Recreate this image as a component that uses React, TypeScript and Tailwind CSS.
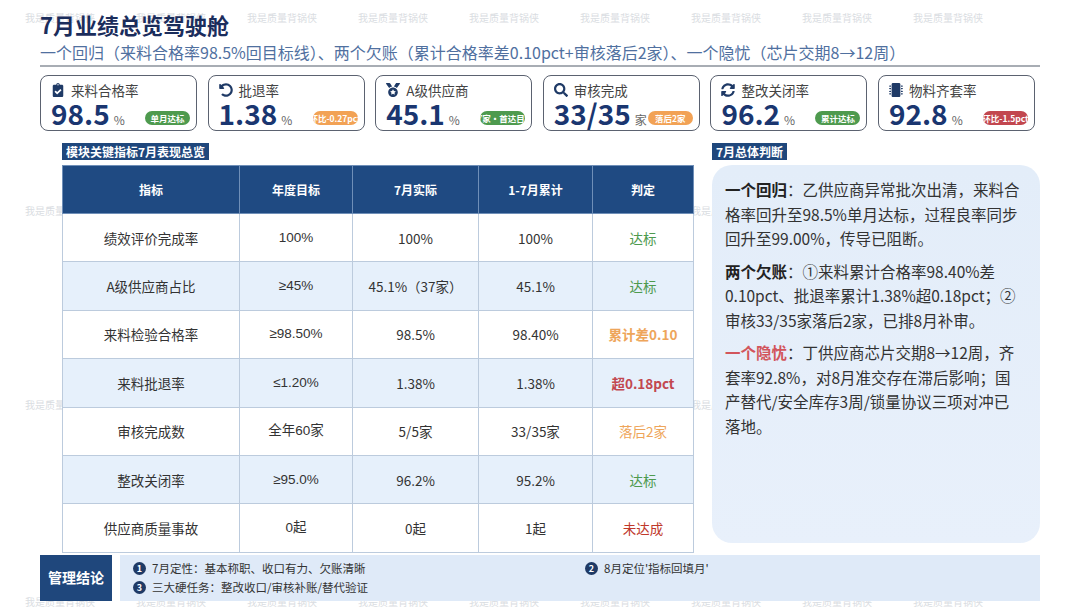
import { FaClipboardCheck, FaUndoAlt, FaMedal, FaSearch, FaSyncAlt, FaMicrochip } from "react-icons/fa";

const kpis = [
  { icon: FaClipboardCheck, label: "来料合格率", value: "98.5", unit: "%", badge: "单月达标", tone: "bg-[#4e9a4e]" },
  { icon: FaUndoAlt, label: "批退率", value: "1.38", unit: "%", badge: "环比-0.27pct", tone: "bg-[#f2a255]" },
  { icon: FaMedal, label: "A级供应商", value: "45.1", unit: "%", badge: "37家·首达目标", tone: "bg-[#4e9a4e]" },
  { icon: FaSearch, label: "审核完成", value: "33/35", unit: "家", badge: "落后2家", tone: "bg-[#f2a255]" },
  { icon: FaSyncAlt, label: "整改关闭率", value: "96.2", unit: "%", badge: "累计达标", tone: "bg-[#4e9a4e]" },
  { icon: FaMicrochip, label: "物料齐套率", value: "92.8", unit: "%", badge: "环比-1.5pct", tone: "bg-[#c2474f]" },
];

const rows = [
  { name: "绩效评价完成率", target: "100%", jul: "100%", ytd: "100%", verdict: "达标", color: "text-[#4e9a4e]" },
  { name: "A级供应商占比", target: "≥45%", jul: "45.1%（37家）", ytd: "45.1%", verdict: "达标", color: "text-[#4e9a4e]" },
  { name: "来料检验合格率", target: "≥98.50%", jul: "98.5%", ytd: "98.40%", verdict: "累计差0.10", color: "text-[#eea55a] font-bold" },
  { name: "来料批退率", target: "≤1.20%", jul: "1.38%", ytd: "1.38%", verdict: "超0.18pct", color: "text-[#c2474f] font-bold" },
  { name: "审核完成数", target: "全年60家", jul: "5/5家", ytd: "33/35家", verdict: "落后2家", color: "text-[#eea55a]" },
  { name: "整改关闭率", target: "≥95.0%", jul: "96.2%", ytd: "95.2%", verdict: "达标", color: "text-[#4e9a4e]" },
  { name: "供应商质量事故", target: "0起", jul: "0起", ytd: "1起", verdict: "未达成", color: "text-[#c0392b]" },
];

// faint repeating watermark, sits behind the content
const wmRows = [10, 203, 397, 594];
const wmCols = [25, 136, 247, 358, 469, 580, 691, 802, 913];

function Watermarks() {
  return (
    <div className="pointer-events-none absolute inset-0 overflow-hidden">
      {wmRows.map((y) =>
        wmCols.map((x) => (
          <span
            key={`${x}-${y}`}
            className="absolute whitespace-nowrap text-[10px] text-[#dadde2]"
            style={{ left: x, top: y }}
          >
            我是质量背锅侠
          </span>
        ))
      )}
    </div>
  );
}

function Num({ n }: { n: string }) {
  return (
    <span className="mr-[6px] inline-flex h-[13px] w-[13px] shrink-0 items-center justify-center rounded-full bg-[#1f3a66] text-[9px] font-bold leading-none text-white">
      {n}
    </span>
  );
}

export default function App() {
  return (
    <div
      className="relative h-[608px] w-[1080px] overflow-hidden bg-white"
      style={{ fontFamily: '"Noto Sans CJK SC", "Noto Sans", sans-serif' }}
    >
      <Watermarks />
      <div className="relative px-[40px] pt-[8px]">
        {/* Header */}
        <h1 className="text-[22px] font-bold leading-[32px] text-[#1b2d5c]">7月业绩总览驾驶舱</h1>
        <div className="border-b-2 border-[#a8adb4] text-[16px] leading-[25px] text-[#50709f]">
          一个回归（来料合格率98.5%回目标线）、两个欠账（累计合格率差0.10pct+审核落后2家）、一个隐忧（芯片交期8→12周）
        </div>

        {/* KPI cards */}
        <div className="mt-[8px] grid w-[995px] grid-cols-6 gap-[10.6px]">
          {kpis.map((k) => {
            const Icon = k.icon;
            return (
              <div key={k.label} className="h-[56px] rounded-[8px] border-[1.5px] border-[#5b6270] bg-white pl-[10px] pr-[6px] pt-[5px]">
                <div className="flex items-center gap-[6px] text-[13.5px] leading-[18px] text-[#444]">
                  <Icon className="text-[14px] text-[#1f3a66]" />
                  <span>{k.label}</span>
                </div>
                <div className="flex items-end justify-between">
                  <div className="flex items-baseline">
                    <span className="text-[28px] font-bold leading-[28px] text-[#1a3670]">{k.value}</span>
                    <span className="ml-[4px] text-[12px] text-[#666]">{k.unit}</span>
                  </div>
                  <div className={`mb-[4px] flex h-[14px] w-[45px] items-center justify-center overflow-hidden rounded-full ${k.tone}`}>
                    <span className="whitespace-nowrap text-[8.5px] font-bold leading-none text-white">{k.badge}</span>
                  </div>
                </div>
              </div>
            );
          })}
        </div>

        {/* Middle */}
        <div className="mt-[12px] flex gap-[19px] pl-[22px]">
          <div className="w-[631px]">
            <div className="w-fit bg-[#1f477c] px-[4px] text-[12px] font-bold leading-[17px] text-white">
              模块关键指标7月表现总览
            </div>
            <table className="mt-[5px] w-[631px] table-fixed border-collapse bg-white text-center">
              <colgroup>
                <col className="w-[177px]" />
                <col className="w-[113px]" />
                <col className="w-[126px]" />
                <col className="w-[114px]" />
                <col className="w-[101px]" />
              </colgroup>
              <thead>
                <tr className="h-[48px] bg-[#1f4a82] text-[12px] font-bold text-white">
                  {["指标", "年度目标", "7月实际", "1-7月累计", "判定"].map((h) => (
                    <th key={h} className="border border-[#6f8fb8]">{h}</th>
                  ))}
                </tr>
              </thead>
              <tbody>
                {rows.map((r, i) => (
                  <tr key={r.name} className={`h-[48.4px] text-[13.5px] text-[#333] ${i % 2 === 1 ? "bg-[#e6f0fb]" : "bg-white"}`}>
                    <td className="border border-[#bccbdd]">{r.name}</td>
                    <td className="border border-[#bccbdd]" style={{ fontFamily: '"Liberation Sans", "Noto Sans CJK SC", sans-serif' }}>{r.target}</td>
                    <td className="border border-[#bccbdd]">{r.jul}</td>
                    <td className="border border-[#bccbdd]">{r.ytd}</td>
                    <td className={`border border-[#bccbdd] ${r.color}`}>{r.verdict}</td>
                  </tr>
                ))}
              </tbody>
            </table>
          </div>

          <div className="w-[328px]">
            <div className="w-fit bg-[#1f477c] px-[4px] text-[12px] font-bold leading-[17px] text-white">
              7月总体判断
            </div>
            <div className="mt-[5px] h-[378px] rounded-[20px] bg-gradient-to-b from-[#e3edf9] to-[#e8f0fb] px-[13px] pt-[12px] text-[15.5px] leading-[24.5px] text-[#333]">
              <p className="whitespace-nowrap">
                <b className="text-[#222]">一个回归</b>：乙供应商异常批次出清，来料合<br />
                格率回升至98.5%单月达标，过程良率同步<br />
                回升至99.00%，传导已阻断。
              </p>
              <p className="mt-[8px] whitespace-nowrap">
                <b className="text-[#222]">两个欠账</b>：①来料累计合格率98.40%差<br />
                0.10pct、批退率累计1.38%超0.18pct；②<br />
                审核33/35家落后2家，已排8月补审。
              </p>
              <p className="mt-[8px] whitespace-nowrap">
                <b className="text-[#d2555c]">一个隐忧</b>：丁供应商芯片交期8→12周，齐<br />
                套率92.8%，对8月准交存在滞后影响；国<br />
                产替代/安全库存3周/锁量协议三项对冲已<br />
                落地。
              </p>
            </div>
          </div>
        </div>

        {/* Bottom */}
        <div className="mt-[2px] flex h-[46px] gap-[8px]">
          <div className="flex w-[72px] items-center justify-center bg-[#1f477c] text-[14px] font-bold text-white">
            管理结论
          </div>
          <div className="flex-1 bg-[#dfeaf8] pl-[13px] pt-[4px] text-[11.5px] leading-[19px] text-[#333]">
            <div className="grid grid-cols-[452px_1fr]">
              <div className="flex items-center"><Num n="1" />7月定性：基本称职、收口有力、欠账清晰</div>
              <div className="flex items-center"><Num n="2" />8月定位'指标回填月'</div>
              <div className="flex items-center"><Num n="3" />三大硬任务：整改收口/审核补账/替代验证</div>
            </div>
          </div>
        </div>
      </div>
    </div>
  );
}
